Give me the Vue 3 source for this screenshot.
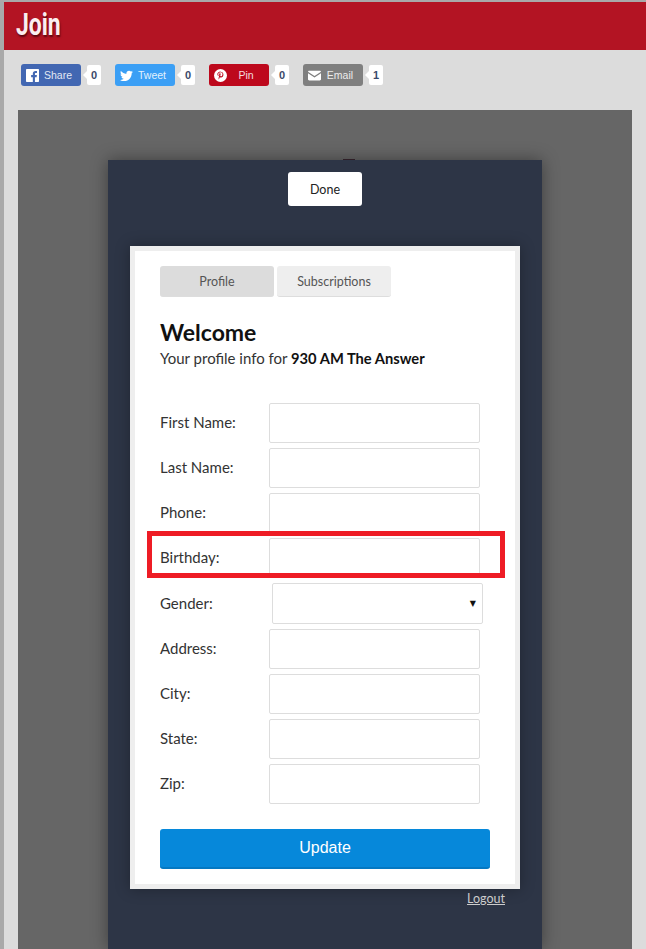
<template>
  <div class="page">
    <header class="top-bar"><h1>Join</h1></header>

    <div class="share-row">
      <div v-for="s in SHARES" :key="s.label" class="share-item">
        <a class="share-btn" :class="s.cls">
          <svg v-if="s.cls === 'fb'" class="ico" viewBox="0 0 16 16"><path fill="#fff" d="M1 0h14a1 1 0 0 1 1 1v14a1 1 0 0 1-1 1h-4v-6h2.100l.3-2.500H11V6c0-.7.200-1.200 1.200-1.200h1.300V2.600c-.2 0-1-.1-1.900-.1-1.900 0-3.200 1.200-3.200 3.300v1.700H6.300V10h2.100v6H1a1 1 0 0 1-1-1V1a1 1 0 0 1 1-1z"/></svg>
          <svg v-else-if="s.cls === 'tw'" class="ico" viewBox="0 0 16 16"><path fill="#fff" d="M16 3.500c-.6.300-1.200.400-1.900.500.700-.400 1.200-1 1.400-1.800-.6.400-1.300.700-2.100.800C12.800 2.400 12 2 11.100 2 9.300 2 7.800 3.500 7.800 5.300c0 .300 0 .500.100.700C5.200 5.900 2.800 4.600 1.100 2.600.8 3.100.7 3.600.7 4.200c0 1.100.6 2.100 1.500 2.700-.5 0-1-.200-1.500-.400 0 1.600 1.100 2.900 2.600 3.200-.3.100-.6.100-.9.100-.2 0-.4 0-.6-.100.4 1.300 1.600 2.300 3.100 2.300-1.100.900-2.500 1.400-4.100 1.400H0c1.500.900 3.200 1.500 5 1.500 6 0 9.400-5 9.400-9.400v-.400c.6-.500 1.200-1 1.600-1.600z"/></svg>
          <svg v-else-if="s.cls === 'pin'" class="ico" viewBox="0 0 16 16"><circle cx="8" cy="8" r="8" fill="#fff"/><path fill="#bd081c" d="M8.300 3.100c-2.800 0-4.200 1.900-4.200 3.500 0 1 .4 1.800 1.200 2.100.1 0 .3 0 .3-.2l.1-.5c0-.2 0-.2-.1-.4-.2-.3-.4-.6-.4-1.100 0-1.400 1.100-2.600 2.800-2.600 1.500 0 2.400.9 2.400 2.100 0 1.600-.7 2.900-1.800 2.900-.6 0-1-.5-.9-1 .2-.7.500-1.400.5-1.900 0-.5-.2-.9-.8-.9-.6 0-1.100.7-1.100 1.500 0 .6.200 1 .2 1l-.8 3.200c-.1.600-.1 1.300 0 1.900 0 .1.100.1.200.1.200-.3.700-1 .9-1.700l.4-1.300c.2.400.8.700 1.400.7 1.800 0 3-1.700 3-3.800 0-1.700-1.400-3.400-3.800-3.400z"/></svg>
          <svg v-else class="ico" viewBox="0 0 16 16"><path fill="#fff" d="M1.500 2h13c.8 0 1.500.7 1.500 1.400L8 8.600 0 3.400C0 2.700.7 2 1.500 2zM0 5.300l8 5.200 8-5.200v7.200c0 .8-.7 1.500-1.500 1.500h-13C.7 14 0 13.300 0 12.500z"/></svg>
          <span class="share-label">{{ s.label }}</span>
        </a>
        <span class="count">{{ s.count }}</span>
      </div>
    </div>

    <section class="backdrop">
      <div class="modal">
        <div class="done-wrap"><button class="done">Done</button></div>

        <div class="card">
          <div class="tabs">
            <button class="tab active">Profile</button>
            <button class="tab">Subscriptions</button>
          </div>

          <h2>Welcome</h2>
          <p class="sub">Your profile info for <b>930 AM The Answer</b></p>

          <form class="form" @submit.prevent>
            <div
              v-for="f in FIELDS"
              :key="f"
              class="row"
              :class="{ marked: f === 'Birthday', tall: f === 'Gender' }"
            >
              <label>{{ f }}:</label>
              <div v-if="f === 'Gender'" class="select"><span class="caret">▼</span></div>
              <input v-else type="text" />
            </div>
            <button class="update">Update</button>
          </form>
        </div>

        <div class="logout-row"><a class="logout">Logout</a></div>
      </div>
    </section>
  </div>
</template>

<script setup>
const SHARES = [
  { cls: 'fb', label: 'Share', count: 0 },
  { cls: 'tw', label: 'Tweet', count: 0 },
  { cls: 'pin', label: 'Pin', count: 0 },
  { cls: 'mail', label: 'Email', count: 1 },
]

const FIELDS = ['First Name', 'Last Name', 'Phone', 'Birthday', 'Gender', 'Address', 'City', 'State', 'Zip']
</script>

<style>
html, body { margin: 0; height: 949px; overflow: hidden; background: #a9a9a9; }
</style>

<style scoped>
.page {
  height: 947px;
  margin: 2px 0 0 4px;
  background: #dcdcdc;
  overflow: hidden;
  font-family: "Lato", "Liberation Sans", sans-serif;
  display: flex;
  flex-direction: column;
}

.top-bar {
  background: #b31423;
  height: 48px;
  flex: none;
  padding-left: 12px;
}

.top-bar h1 {
  display: inline-block;
  margin: 0;
  font: bold 31px/46px "Roboto", "Liberation Sans", sans-serif;
  color: #fbeef0;
  text-shadow: 1px 2px 2px #5c0710;
  transform: scaleX(0.74);
  transform-origin: left center;
}

.share-row {
  display: flex;
  gap: 14px;
  padding: 14px 0 0 17px;
  height: 46px;
  flex: none;
  box-sizing: content-box;
}

.share-item { display: flex; align-items: center; height: 22px; gap: 6px; position: relative; }

.share-btn {
  width: 60px;
  height: 22px;
  border-radius: 3px;
  display: flex;
  align-items: center;
  padding-left: 5px;
  box-sizing: border-box;
  color: #fff;
  font: 10.5px "Liberation Sans", sans-serif;
}

.fb { background: #4267b2; }
.tw { background: #3b9ff5; }
.pin { background: #bd081c; }
.mail { background: #7f7f7f; }

.ico { width: 13px; height: 13px; flex: none; }
.share-label { flex: 1; text-align: center; padding-right: 4px; opacity: 0.85; }

.count {
  width: 14px;
  height: 20px;
  background: #fff;
  border-radius: 2px;
  text-align: center;
  font: bold 11px/20px "Liberation Sans", sans-serif;
  color: #3b4a6b;
  position: relative;
}

.count::before {
  content: '';
  position: absolute;
  left: -4px;
  top: 6px;
  border: 4px solid transparent;
  border-left: 0;
  border-right-color: #fff;
}

.backdrop {
  flex: 1;
  margin: 0 14px;
  background: #666;
  display: flex;
  justify-content: center;
  padding-top: 50px;
  overflow: hidden;
}

.modal {
  width: 434px;
  background: #2d3546;
  box-shadow: 0 0 16px rgba(0, 0, 0, 0.4);
  padding: 12px 22px 0;
  box-sizing: border-box;
  position: relative;
}

/* dark nub peeking out above the modal */
.modal::before {
  content: '';
  position: absolute;
  left: 235px;
  top: -1px;
  width: 12px;
  height: 1px;
  background: #2e1e26;
}

.done-wrap { display: flex; justify-content: center; }

.done {
  width: 74px;
  height: 34px;
  border: 0;
  border-radius: 3px;
  background: #fff;
  font: 12.5px "Lato", sans-serif;
  color: #222;
}

.card {
  width: 390px;
  height: 643px;
  margin-top: 40px;
  background: #fff;
  border: 5px solid #eee;
  box-sizing: border-box;
  padding: 15px 25px 0;
  box-shadow: 0 0 14px rgba(0, 0, 0, 0.3);
}

.tabs { display: flex; gap: 3px; }

.tab {
  width: 114px;
  height: 31px;
  border: 0;
  border-bottom: 1px solid #ddd;
  border-radius: 3px;
  background: #eee;
  font: 12.5px "Lato", sans-serif;
  color: #555;
  padding: 0;
}

.tab.active { background: #dcdcdc; }

h2 {
  margin: 21px 0 0;
  font: bold 23px/28px "Lato", sans-serif;
  color: #111;
}

.sub {
  margin: 2px 0 0;
  font: 15px/20px "Lato", sans-serif;
  color: #333;
}

.sub b { color: #111; font-size: 14.7px; }

.form { margin-top: 35px; }

.row {
  display: flex;
  align-items: center;
  height: 40px;
  margin-bottom: 5px;
  position: relative;
}

.row.tall { height: 41px; }

.row label {
  width: 109px;
  flex: none;
  padding-bottom: 2px;
  font: 15px "Lato", sans-serif;
  color: #333;
}

.row input, .select {
  width: 211px;
  height: 40px;
  border: 1px solid #ddd;
  border-radius: 2px;
  box-sizing: border-box;
  background: #fff;
  padding: 0;
}

.select {
  height: 41px;
  margin-left: 3px;
  display: flex;
  align-items: center;
  justify-content: flex-end;
  padding-right: 6px;
}

.caret { font: 8px "DejaVu Sans", sans-serif; color: #111; }

.row.marked::after {
  content: '';
  position: absolute;
  left: -13px;
  top: -7px;
  width: 358px;
  height: 47px;
  border: 5px solid #ee1c25;
  box-sizing: border-box;
  pointer-events: none;
}

.update {
  display: block;
  width: 330px;
  height: 40px;
  margin-top: 25px;
  border: 0;
  border-bottom: 2px solid #0478c2;
  border-radius: 3px;
  background: #0688da;
  color: #fff;
  font: 16px "Liberation Sans", sans-serif;
}

.logout-row { display: flex; justify-content: flex-end; padding: 2px 15px 0 0; }

.logout {
  font: 12.5px "Lato", sans-serif;
  color: #ccc;
  text-decoration: underline;
}
</style>
